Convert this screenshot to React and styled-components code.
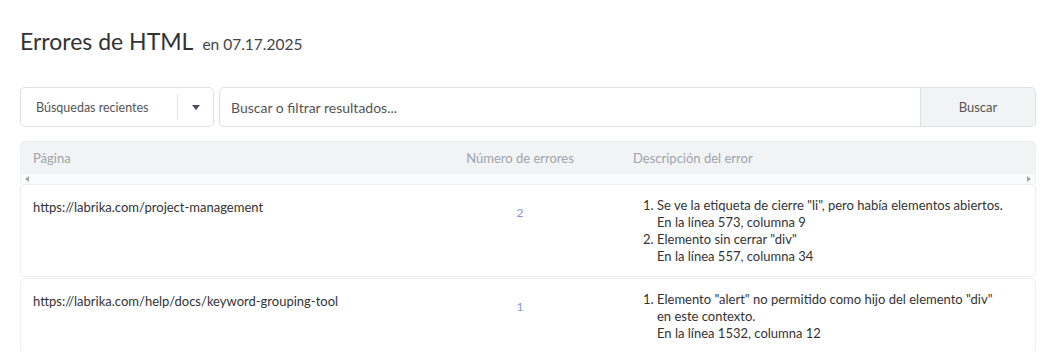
import React from 'react';
import styled, { createGlobalStyle } from 'styled-components';

const GlobalStyle = createGlobalStyle`
  body {
    margin: 0;
    background: #ffffff;
    font-family: Lato, "Open Sans", sans-serif;
    color: #333;
  }
`;

const Page = styled.div`
  padding: 27px 15px 0 20px;
`;

const Title = styled.h1`
  margin: 0;
  font-weight: 400;
  font-size: 23px;
  line-height: 28px;
  color: #333;
  display: flex;
  align-items: baseline;
  gap: 9px;
`;

const TitleDate = styled.span`
  font-size: 15.5px;
  color: #444;
`;

const SearchBar = styled.div`
  display: flex;
  gap: 5px;
  margin-top: 29px;
  height: 40px;
`;

const Recent = styled.div`
  width: 194px;
  box-sizing: border-box;
  border: 1px solid #dfe1e6;
  border-radius: 5px;
  display: flex;
  align-items: center;
  padding-left: 15px;
  font-size: 12.5px;
  color: #555;
`;

const RecentLabel = styled.span`
  flex: 1;
`;

const Divider = styled.span`
  width: 1px;
  height: 26px;
  background: #dfe1e6;
`;

const Caret = styled.span`
  width: 35px;
  display: flex;
  justify-content: center;
  &::after {
    content: '';
    border-left: 4px solid transparent;
    border-right: 4px solid transparent;
    border-top: 5px solid #4a5060;
  }
`;

const SearchBox = styled.div`
  flex: 1;
  display: flex;
  border: 1px solid #dfe1e6;
  border-radius: 5px;
  overflow: hidden;
`;

const Input = styled.div`
  flex: 1;
  display: flex;
  align-items: center;
  padding-left: 11px;
  font-size: 14px;
  color: #555;
`;

const SearchButton = styled.div`
  width: 114px;
  border-left: 1px solid #dfe1e6;
  background: #f2f3f5;
  display: flex;
  align-items: center;
  justify-content: center;
  font-size: 13px;
  color: #555;
`;

const Table = styled.div`
  margin-top: 14px;
`;

const Head = styled.div`
  border: 1px solid #eceef2;
  border-bottom: none;
  border-radius: 5px 5px 0 0;
  background: #f2f3f5;
`;

const Row = styled.div`
  display: grid;
  grid-template-columns: 431px 136px 1fr;
`;

const HeadCell = styled.div`
  height: 32px;
  display: flex;
  align-items: center;
  padding-left: ${p => p.$pad ?? 12}px;
  justify-content: ${p => (p.$center ? 'center' : 'flex-start')};
  font-size: 13px;
  color: #9ea3ad;
  white-space: nowrap;
`;

const Scroll = styled.div`
  height: 10px;
  background: #fafbfc;
  display: flex;
  justify-content: space-between;
  align-items: center;
  padding: 0 4px;
`;

const Arrow = styled.span`
  border-top: 3px solid transparent;
  border-bottom: 3px solid transparent;
  ${p => (p.$right ? 'border-left: 4px solid #a3a6ab;' : 'border-right: 4px solid #a3a6ab;')}
`;

const Card = styled(Row)`
  border: 1px solid #eceef2;
  border-radius: 5px;
  padding: 12px 0 11px;
  background: #fff;
  & + & {
    margin-top: 1px;
  }
`;

const Url = styled.div`
  padding-left: 12px;
  font-size: 13px;
  line-height: 17px;
  padding-top: 2px;
  color: #333;
`;

const Count = styled.div`
  text-align: center;
  font-size: 12px;
  color: #8a95cc;
  padding-top: 8px;
`;

const List = styled.ol`
  margin: 0;
  padding: 0 0 0 69px;
  font-size: 13px;
  line-height: 17px;
  color: #333;
`;

const Line = styled.div``;

const rows = [
  {
    url: 'https://labrika.com/project-management',
    count: 2,
    errors: [
      ['Se ve la etiqueta de cierre "li", pero había elementos abiertos.', 'En la línea 573, columna 9'],
      ['Elemento sin cerrar "div"', 'En la línea 557, columna 34'],
    ],
  },
  {
    url: 'https://labrika.com/help/docs/keyword-grouping-tool',
    count: 1,
    errors: [
      ['Elemento "alert" no permitido como hijo del elemento "div"', 'en este contexto.', 'En la línea 1532, columna 12'],
    ],
  },
];

export default function App() {
  return (
    <Page>
      <GlobalStyle />
      <Title>
        Errores de HTML <TitleDate>en 07.17.2025</TitleDate>
      </Title>

      <SearchBar>
        <Recent>
          <RecentLabel>Búsquedas recientes</RecentLabel>
          <Divider />
          <Caret />
        </Recent>
        <SearchBox>
          <Input>Buscar o filtrar resultados...</Input>
          <SearchButton>Buscar</SearchButton>
        </SearchBox>
      </SearchBar>

      <Table>
        <Head>
          <Row>
            <HeadCell>Página</HeadCell>
            <HeadCell $center $pad={0}>Número de errores</HeadCell>
            <HeadCell $pad={45}>Descripción del error</HeadCell>
          </Row>
          <Scroll>
            <Arrow />
            <Arrow $right />
          </Scroll>
        </Head>
        {rows.map(r => (
          <Card key={r.url}>
            <Url>{r.url}</Url>
            <Count>{r.count}</Count>
            <List>
              {r.errors.map((lines, i) => (
                <li key={i}>
                  {lines.map(l => (
                    <Line key={l}>{l}</Line>
                  ))}
                </li>
              ))}
            </List>
          </Card>
        ))}
      </Table>
    </Page>
  );
}
